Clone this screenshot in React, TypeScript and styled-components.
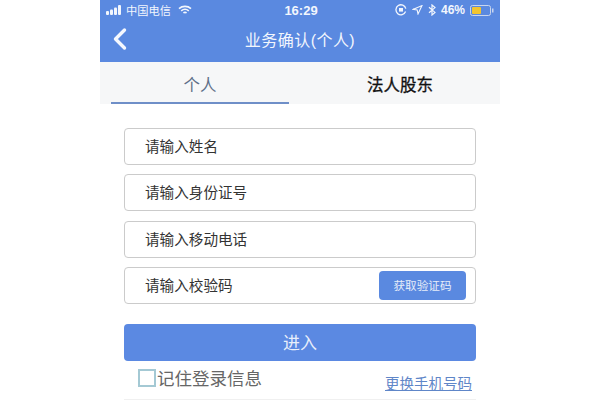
import React from 'react';
import styled, { createGlobalStyle } from 'styled-components';

const GlobalStyle = createGlobalStyle`
  html, body {
    margin: 0;
    padding: 0;
    background: #fff;
  }
`;

const Page = styled.div`
  width: 600px;
  height: 400px;
  display: flex;
  justify-content: center;
  overflow: hidden;
  background: #fff;
  font-family: 'Liberation Sans', 'Noto Sans CJK SC', sans-serif;
`;

const Phone = styled.div`
  width: 400px;
  height: 400px;
  display: flex;
  flex-direction: column;
`;

const Header = styled.header`
  height: 62px;
  flex: none;
  background: #5a89e0;
  color: #f2f6fd;
`;

const StatusBar = styled.div`
  height: 20px;
  padding: 0 6px;
  display: flex;
  align-items: center;
  justify-content: space-between;
  font-size: 11px;
`;

const StatusGroup = styled.div<{ $end?: boolean }>`
  width: 160px;
  display: flex;
  align-items: center;
  gap: ${(p) => (p.$end ? '5px' : '4px')};
  justify-content: ${(p) => (p.$end ? 'flex-end' : 'flex-start')};
`;

const Carrier = styled.span`
  font-size: 11.25px;
  margin-right: 3px;
`;

const Clock = styled.span`
  font-size: 13px;
  font-weight: 700;
  margin-left: 2px;
`;

const Percent = styled.span`
  font-size: 12px;
  font-weight: 700;
`;

const NavBar = styled.div`
  height: 42px;
  padding: 0 13px;
  display: grid;
  grid-template-columns: 40px 1fr 40px;
  align-items: center;
`;

const NavTitle = styled.div`
  text-align: center;
  font-size: 16px;
  letter-spacing: 0.45px;
  margin-top: -4px;
`;

const BackIcon = styled.svg`
  display: block;
  margin-top: -5px;
`;

const Tabs = styled.nav`
  height: 42px;
  flex: none;
  display: grid;
  grid-template-columns: 1fr 1fr;
  background: #f6f7f8;
`;

const Tab = styled.div<{ $active?: boolean }>`
  margin: 0 11px;
  display: flex;
  align-items: center;
  justify-content: center;
  box-sizing: border-box;
  padding-top: 3px;
  font-size: 16.5px;
  -webkit-text-stroke: ${(p) => (p.$active ? '0' : '0.3px')};
  color: ${(p) => (p.$active ? '#5f7089' : '#111')};
  border-bottom: 2px solid ${(p) => (p.$active ? '#6f8fc8' : 'transparent')};
`;

const Form = styled.main`
  flex: 1;
  padding: 24px 24px 0;
  display: flex;
  flex-direction: column;
`;

const Field = styled.div`
  height: 37px;
  flex: none;
  box-sizing: border-box;
  margin-bottom: 9.34px;
  padding: 0 9px 0 20px;
  display: flex;
  align-items: center;
  justify-content: space-between;
  border: 1px solid #cbcbcb;
  border-radius: 4px;
`;

const FieldLabel = styled.span`
  margin-top: -2px;
  font-size: 14.6px;
  color: #333;
`;

const CodeButton = styled.div`
  width: 87px;
  height: 29px;
  display: flex;
  align-items: center;
  justify-content: center;
  border-radius: 4px;
  background: #5a89e0;
  color: #e6edf9;
  font-size: 11.6px;
`;

const SubmitButton = styled.div`
  height: 37px;
  flex: none;
  margin-top: 10.6px;
  padding-bottom: 2px;
  box-sizing: border-box;
  display: flex;
  align-items: center;
  justify-content: center;
  border-radius: 4px;
  background: #5b89e2;
  color: #e8effb;
  font-size: 17px;
`;

const OptionsRow = styled.div`
  flex: 1;
  padding: 0 4px 3px 14px;
  display: flex;
  align-items: center;
  justify-content: space-between;
  border-bottom: 1px solid #f0f0f0;
`;

const Remember = styled.label`
  display: flex;
  align-items: center;
  gap: 1px;
  font-size: 17.5px;
  color: #666;
`;

const RememberText = styled.span`
  margin-top: -2px;
`;

const CheckBox = styled.span`
  width: 18px;
  height: 18px;
  box-sizing: border-box;
  border: 2px solid #a4c9d4;
`;

const ChangeLink = styled.a`
  margin-top: 9px;
  font-size: 14.5px;
  color: #5f86c8;
  text-decoration: underline;
`;

const SignalBars = () => (
  <svg width="16" height="10" viewBox="0 0 16 10" fill="currentColor">
    <rect x="0" y="6" width="3" height="4" rx="1" />
    <rect x="4" y="4.5" width="3" height="5.5" rx="1" />
    <rect x="8" y="2.5" width="3" height="7.5" rx="1" />
    <rect x="12" y="0" width="3" height="10" rx="1" />
  </svg>
);

const WifiIcon = () => (
  <svg width="14" height="10" viewBox="0 0 14 10" fill="none" stroke="currentColor" strokeWidth="1.6">
    <path d="M1 3.6C4.4.6 9.6.6 13 3.6" />
    <path d="M3.2 5.8C5.4 4 8.6 4 10.8 5.8" />
    <path d="M5.4 7.9C6.4 7.2 7.6 7.2 8.6 7.9" />
  </svg>
);

const LockRotationIcon = () => (
  <svg width="12" height="12" viewBox="0 0 12 12" fill="none" stroke="currentColor">
    <path d="M10.6 7.6A5 5 0 1 1 10.8 4.6" strokeWidth="1.3" />
    <rect x="4" y="4" width="4" height="3.6" fill="currentColor" stroke="none" />
  </svg>
);

const LocationIcon = () => (
  <svg width="11" height="10" viewBox="0 0 11 10" fill="none" stroke="currentColor" strokeWidth="1.1">
    <path d="M10 .6L6 9 5.2 5 1 4.4z" />
  </svg>
);

const BluetoothIcon = () => (
  <svg width="8" height="12" viewBox="0 0 8 12" fill="none" stroke="currentColor" strokeWidth="1.2">
    <path d="M1 3.2L7 8.4 4 11V1L7 3.6 1 8.8" />
  </svg>
);

const BatteryIcon = () => (
  <svg width="24" height="11" viewBox="0 0 24 11">
    <rect x="0.5" y="0.5" width="20" height="10" rx="2" fill="none" stroke="#c9d6ee" />
    <rect x="2" y="2" width="9" height="7" rx="1" fill="#f2c530" />
    <rect x="22" y="3.5" width="1.5" height="4" fill="#c9d6ee" />
  </svg>
);

const App = () => {
  return (
    <Page>
      <GlobalStyle />
      <Phone>
        <Header>
          <StatusBar>
            <StatusGroup>
              <SignalBars />
              <Carrier>中国电信</Carrier>
              <WifiIcon />
            </StatusGroup>
            <Clock>16:29</Clock>
            <StatusGroup $end>
              <LockRotationIcon />
              <LocationIcon />
              <BluetoothIcon />
              <Percent>46%</Percent>
              <BatteryIcon />
            </StatusGroup>
          </StatusBar>
          <NavBar>
            <BackIcon width="14" height="24" viewBox="0 0 14 24" fill="none" stroke="#f5f8fe" strokeWidth="3.4" strokeLinecap="round" strokeLinejoin="round">
              <path d="M11.5 3L2.5 12l9 9" />
            </BackIcon>
            <NavTitle>业务确认(个人)</NavTitle>
          </NavBar>
        </Header>
        <Tabs>
          <Tab $active>个人</Tab>
          <Tab>法人股东</Tab>
        </Tabs>
        <Form>
          <Field>
            <FieldLabel>请输入姓名</FieldLabel>
          </Field>
          <Field>
            <FieldLabel>请输入身份证号</FieldLabel>
          </Field>
          <Field>
            <FieldLabel>请输入移动电话</FieldLabel>
          </Field>
          <Field>
            <FieldLabel>请输入校验码</FieldLabel>
            <CodeButton>获取验证码</CodeButton>
          </Field>
          <SubmitButton>进入</SubmitButton>
          <OptionsRow>
            <Remember>
              <CheckBox />
              <RememberText>记住登录信息</RememberText>
            </Remember>
            <ChangeLink>更换手机号码</ChangeLink>
          </OptionsRow>
        </Form>
      </Phone>
    </Page>
  );
};

export default App;
